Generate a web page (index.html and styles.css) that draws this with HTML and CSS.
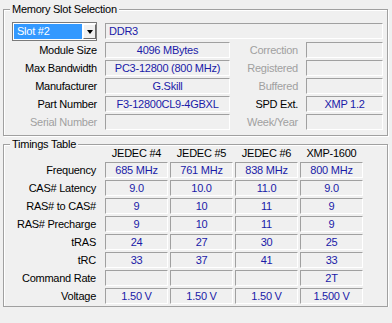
FILE: index.html
```html
<!DOCTYPE html>
<html lang="en">
<head>
  <meta charset="UTF-8">
  <meta name="viewport" content="width=device-width, initial-scale=1.0">
  <title>SPD</title>
  <link rel="stylesheet" href="styles.css">
</head>
<body>
  <div class="window">
    <div class="group slot-group">
      <div class="group-title">Memory Slot Selection</div>
      <div class="slot-grid">
        <div class="combo">
          <span class="combo-value">Slot #2</span>
          <span class="combo-btn"><span class="arrow"></span></span>
        </div>
        <div class="field left ddr">DDR3</div>

        <div class="label">Module Size</div>
        <div class="field">4096 MBytes</div>
        <div class="label off">Correction</div>
        <div class="field"></div>

        <div class="label">Max Bandwidth</div>
        <div class="field">PC3-12800 (800 MHz)</div>
        <div class="label off">Registered</div>
        <div class="field"></div>

        <div class="label">Manufacturer</div>
        <div class="field">G.Skill</div>
        <div class="label off">Buffered</div>
        <div class="field"></div>

        <div class="label">Part Number</div>
        <div class="field">F3-12800CL9-4GBXL</div>
        <div class="label">SPD Ext.</div>
        <div class="field">XMP 1.2</div>

        <div class="label off">Serial Number</div>
        <div class="field"></div>
        <div class="label off">Week/Year</div>
        <div class="field"></div>
      </div>
    </div>

    <div class="group timing-group">
      <div class="group-title">Timings Table</div>
      <div class="timing-grid">
        <div></div>
        <div class="head">JEDEC #4</div>
        <div class="head">JEDEC #5</div>
        <div class="head">JEDEC #6</div>
        <div class="head">XMP-1600</div>

        <div class="label">Frequency</div>
        <div class="field">685 MHz</div>
        <div class="field">761 MHz</div>
        <div class="field">838 MHz</div>
        <div class="field">800 MHz</div>

        <div class="label">CAS# Latency</div>
        <div class="field">9.0</div>
        <div class="field">10.0</div>
        <div class="field">11.0</div>
        <div class="field">9.0</div>

        <div class="label">RAS# to CAS#</div>
        <div class="field">9</div>
        <div class="field">10</div>
        <div class="field">11</div>
        <div class="field">9</div>

        <div class="label">RAS# Precharge</div>
        <div class="field">9</div>
        <div class="field">10</div>
        <div class="field">11</div>
        <div class="field">9</div>

        <div class="label">tRAS</div>
        <div class="field">24</div>
        <div class="field">27</div>
        <div class="field">30</div>
        <div class="field">25</div>

        <div class="label">tRC</div>
        <div class="field">33</div>
        <div class="field">37</div>
        <div class="field">41</div>
        <div class="field">33</div>

        <div class="label">Command Rate</div>
        <div class="field"></div>
        <div class="field"></div>
        <div class="field"></div>
        <div class="field">2T</div>

        <div class="label">Voltage</div>
        <div class="field">1.50 V</div>
        <div class="field">1.50 V</div>
        <div class="field">1.50 V</div>
        <div class="field">1.500 V</div>
      </div>
    </div>
  </div>
</body>
</html>
```

FILE: styles.css
```css
* { box-sizing: border-box; }

body {
  margin: 0;
  background: #f0f0f0;
  font-family: 'Liberation Sans', Arial, sans-serif;
  font-size: 11px;
  letter-spacing: -0.25px;
  color: #000;
}

.window {
  width: 392px;
  padding: 9px 4px 0 3px;
}

/* etched group box */
.group {
  border: 1px solid #a0a0a0;
  box-shadow: inset 1px 1px 0 #fff, 1px 1px 0 #fff;
  padding: 0 4px 5px 8px;
}
.group-title {
  width: fit-content;
  margin: -7px 0 0 -2px;
  padding: 0 2px;
  line-height: 13px;
  background: #f0f0f0;
}
.timing-group { margin-top: 8px; padding-bottom: 2px; }

.label {
  text-align: right;
  line-height: 16px;
  white-space: nowrap;
}
.off { color: #a0a0a0; }

.field {
  height: 16px;
  border: 1px solid;
  border-color: #a0a0a0 #fff #fff #a0a0a0;
  line-height: 14px;
  text-align: center;
  color: #1a1aa8;
  white-space: nowrap;
  overflow: hidden;
}
.field.left { text-align: left; padding-left: 3px; }

.slot-grid {
  display: grid;
  grid-template-columns: 85px 125px 60px 77px;
  grid-template-rows: 18px repeat(5, 16px);
  column-gap: 8px;
  row-gap: 2px;
  margin-top: 6px;
}
.ddr { grid-column: 2 / 5; margin-top: 1px; }

.combo {
  display: flex;
  height: 19px;
  border: 1px solid #7a7a7a;
  background: #fff;
  padding: 1px 0 1px 1px;
}
.combo-value {
  flex: 1;
  margin-right: 1px;
  padding-left: 3px;
  background: #3399ff;
  color: #fff;
  line-height: 15px;
}
.combo-btn {
  width: 13px;
  display: flex;
  align-items: center;
  justify-content: center;
  background: #f0f0f0;
  border: 1px solid;
  border-color: #fff #696969 #696969 #fff;
}
.arrow {
  width: 1px;
  height: 0;
  border-left: 3px solid transparent;
  border-right: 3px solid transparent;
  border-top: 4px solid #000;
}

.timing-grid {
  display: grid;
  grid-template-columns: 91px repeat(4, 63px);
  grid-template-rows: 13px repeat(8, 16px);
  column-gap: 2px;
  row-gap: 2px;
  margin-top: -4px;
}
.timing-grid .label { padding-right: 7px; }
.head {
  text-align: center;
  line-height: 13px;
  white-space: nowrap;
}
```
